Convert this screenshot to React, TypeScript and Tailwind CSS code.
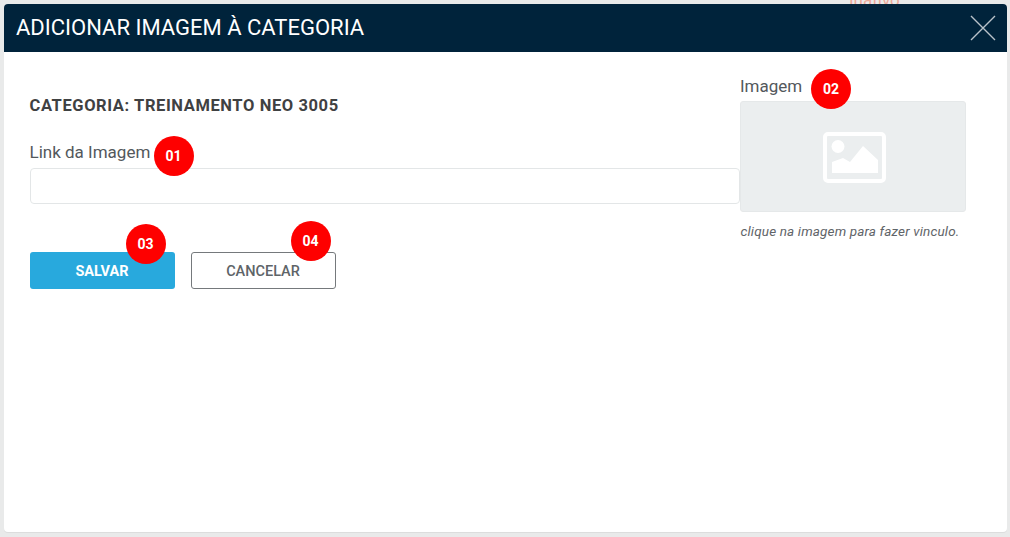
import React from "react";

function Badge({ n, className }: { n: string; className: string }) {
  return (
    <span className={"absolute flex h-10 w-10 items-center justify-center rounded-full bg-[#fe0000] text-[14px] font-bold text-white " + className}>
      {n}
    </span>
  );
}

export default function App() {
  return (
    <div className="relative h-[537px] w-[1010px] overflow-hidden bg-[#e9eaea] font-['Roboto',sans-serif]">
      <span className="absolute left-[849px] top-[-12px] text-[17px] text-[#eba898]">Inativo</span>
      <div className="absolute left-[4px] top-[4px] flex h-[528px] w-[1003px] flex-col overflow-hidden rounded-[4px] bg-white shadow-[0_1px_0_#dcdddd]">
        <header className="flex h-[48px] shrink-0 items-center justify-between bg-[#00233b] pl-[12px] pr-[11px]">
          <h1 className="text-[22px] leading-none text-white">ADICIONAR IMAGEM À CATEGORIA</h1>
          <svg width="26" height="26" viewBox="0 0 26 26" fill="none" stroke="#b9c2c9" strokeWidth="1.4">
            <path d="M1 1L25 25M25 1L1 25" />
          </svg>
        </header>
        <div className="flex pl-[25.5px] pt-[24px]">
          <div className="w-[710.5px] shrink-0 pt-[20px]">
            <p className="text-[16.5px] font-bold leading-[20px] tracking-[0.6px] text-[#3f4142]">CATEGORIA: TREINAMENTO NEO 3005</p>
            <div className="relative mt-[26px] w-fit">
              <label className="block text-[17px] leading-[20px] text-[#53585c]">Link da Imagem</label>
              <Badge n="01" className="left-[124px] top-[-6px]" />
            </div>
            <div className="mt-[6px] h-[36px] rounded-[4px] border border-[#e3e6e7] bg-white" />
            <div className="mt-[48px] flex gap-[16px]">
              <div className="relative">
                <button className="h-[37px] w-[145px] rounded-[3px] bg-[#28a9dd] pt-[2px] text-[14.5px] font-bold text-white">SALVAR</button>
                <Badge n="03" className="left-[96px] top-[-28px]" />
              </div>
              <div className="relative">
                <button className="h-[37px] w-[145px] rounded-[3px] border-[1.5px] border-[#75797c] bg-white pt-[2px] text-[14.5px] font-medium text-[#5e6468]">CANCELAR</button>
                <Badge n="04" className="left-[100px] top-[-31px]" />
              </div>
            </div>
          </div>
          <div className="w-[226px] shrink-0">
            <div className="relative w-fit">
              <label className="block text-[17px] leading-[20px] text-[#53585c]">Imagem</label>
              <Badge n="02" className="left-[71px] top-[-7px]" />
            </div>
            <div className="mt-[5px] flex h-[111px] items-center justify-center rounded-[3px] border border-[#e5e8e9] bg-[#ebeeef]">
              <svg width="64" height="51" viewBox="0 0 64 51" className="ml-[3px] mt-[1px]">
                <rect x="2" y="2" width="59" height="47" rx="3" fill="none" stroke="#fff" strokeWidth="4" />
                <circle cx="15" cy="14.5" r="6.5" fill="#fff" />
                <path d="M9 41V30L20 26L27 30L40 14L55 28V41Z" fill="#fff" />
              </svg>
            </div>
            <p className="mt-[11px] pl-[0.5px] text-[13.5px] italic leading-[16px] tracking-[0.15px] text-[#5f6468]">clique na imagem para fazer vinculo.</p>
          </div>
        </div>
      </div>
    </div>
  );
}
